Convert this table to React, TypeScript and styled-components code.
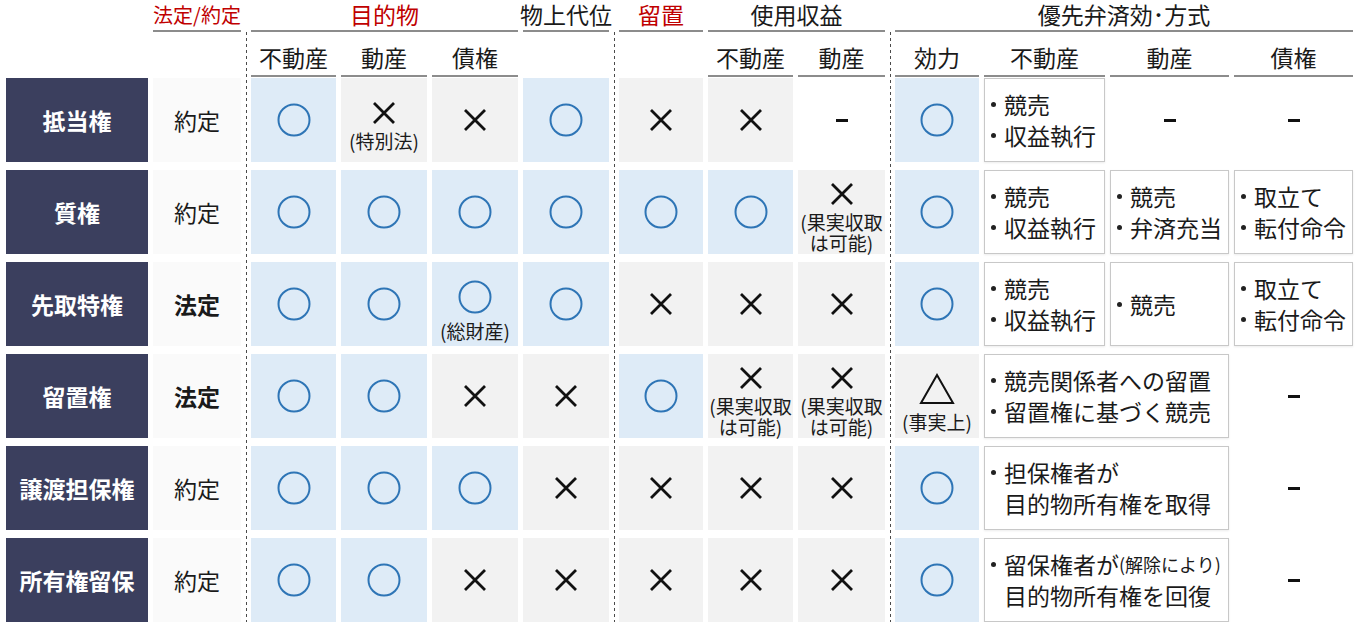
import React from 'react'
import styled, { createGlobalStyle } from 'styled-components'

const GlobalStyle = createGlobalStyle`
  html, body {
    margin: 0;
    padding: 0;
    background: #ffffff;
  }
  body {
    font-family: "Noto Sans CJK JP", "Noto Sans", sans-serif;
    color: #1a1a1a;
  }
`

// label | kind | div | 目的物 x3 | 物上代位 | div | 留置 | 使用収益 x2 | div | 効力 | 方式 x3
const COLS = '142px 88px 0 85px 86px 86px 86px 0 84px 85px 87px 0 84px 121px 119px 119px'

const Table = styled.div`
  display: grid;
  grid-template-columns: ${COLS};
  grid-template-rows: 32px 46px;
  grid-auto-rows: 92px;
  column-gap: 5px;
  padding-left: 6px;
`

const GroupHead = styled.div<{ $col: string; $red?: boolean; $small?: boolean }>`
  grid-row: 1;
  grid-column: ${p => p.$col};
  height: 32px;
  box-sizing: border-box;
  border-bottom: 2px solid #8c8c8c;
  display: flex;
  align-items: center;
  justify-content: center;
  font-size: ${p => (p.$small ? 20 : 23)}px;
  line-height: 1.3;
  white-space: nowrap;
  color: ${p => (p.$red ? '#c00000' : '#1a1a1a')};
`

const SubHead = styled.div<{ $col: number }>`
  grid-row: 2;
  grid-column: ${p => p.$col};
  height: 45px;
  box-sizing: border-box;
  border-bottom: 2px solid #8c8c8c;
  display: flex;
  align-items: flex-end;
  justify-content: center;
  padding-bottom: 3px;
  font-size: 23px;
  line-height: 1.2;
`

const Divider = styled.div<{ $col: number }>`
  grid-row: 2 / span 7;
  grid-column: ${p => p.$col};
  width: 1px;
  background: repeating-linear-gradient(to bottom, #4a4a4a 0 3px, transparent 3px 6px);
`

const Label = styled.div<{ $row: number }>`
  grid-row: ${p => p.$row};
  grid-column: 1;
  height: 84px;
  background: #3b3f5e;
  color: #ffffff;
  font-weight: 700;
  font-size: 23px;
  display: flex;
  align-items: center;
  justify-content: center;
`

const Kind = styled.div<{ $row: number; $bold?: boolean }>`
  grid-row: ${p => p.$row};
  grid-column: 2;
  height: 84px;
  background: #fafafa;
  font-size: 23px;
  font-weight: ${p => (p.$bold ? 700 : 400)};
  display: flex;
  align-items: center;
  justify-content: center;
`

const TONES = { blue: '#deebf7', gray: '#f2f2f2', white: '#ffffff' }
type Tone = keyof typeof TONES

const MarkCell = styled.div<{ $row: number; $col: number; $tone: Tone; $noted?: boolean }>`
  grid-row: ${p => p.$row};
  grid-column: ${p => p.$col};
  height: 84px;
  box-sizing: border-box;
  background: ${p => TONES[p.$tone]};
  display: flex;
  flex-direction: column;
  align-items: center;
  justify-content: center;
  gap: 6px;
  padding-top: ${p => (p.$noted ? 12 : 0)}px;
`

const Note = styled.div`
  font-size: 19px;
  line-height: 21px;
  text-align: center;
  white-space: nowrap;
`

const Dash = styled.span`
  display: block;
  width: 12px;
  height: 3px;
  background: #111;
`

const MethodBox = styled.div<{ $row: number; $col: string }>`
  grid-row: ${p => p.$row};
  grid-column: ${p => p.$col};
  height: 84px;
  box-sizing: border-box;
  background: #ffffff;
  border: 1px solid #c8c8c8;
  box-shadow: 0 1px 2px rgba(0, 0, 0, 0.08);
  padding: 0 4px;
  display: flex;
  flex-direction: column;
  justify-content: center;
  font-size: 23px;
  line-height: 31px;
  white-space: nowrap;
`

const Line = styled.div`
  display: flex;
  align-items: center;
`

const Bullet = styled.span<{ $hidden?: boolean }>`
  flex: none;
  width: 15px;
  display: flex;
  align-items: center;
  &::before {
    content: '';
    width: 5px;
    height: 5px;
    border-radius: 50%;
    margin-left: 2px;
    background: ${p => (p.$hidden ? 'transparent' : '#222')};
  }
`

const Small = styled.span`
  font-size: 18px;
`

const Circle = () => (
  <svg width="34" height="34" viewBox="0 0 34 34">
    <circle cx="17" cy="17" r="15.5" fill="none" stroke="#2e75b6" strokeWidth="2" />
  </svg>
)

const Cross = () => (
  <svg width="24" height="22" viewBox="0 0 24 22">
    <path d="M2 1 L22 21 M22 1 L2 21" stroke="#111" strokeWidth="2.8" fill="none" />
  </svg>
)

const Triangle = () => (
  <svg width="36" height="32" viewBox="0 0 36 32">
    <polygon points="18,2 34,30 2,30" fill="none" stroke="#111" strokeWidth="2" strokeLinejoin="miter" />
  </svg>
)

type Kindname = 'o' | 'x' | 'tri' | 'dash'
type Mark = { k: Kindname; tone: Tone; note?: string[] }
type MethodLine = { text: string; small?: string; noBullet?: boolean }
type Method = { col: string; lines?: MethodLine[] }

const o: Mark = { k: 'o', tone: 'blue' }
const x: Mark = { k: 'x', tone: 'gray' }
const fruit = ['(果実収取', 'は可能)']

const MARK_COLS = [4, 5, 6, 7, 9, 10, 11, 13]

const rows: { name: string; kind: string; legal?: boolean; marks: Mark[]; methods: Method[] }[] = [
  {
    name: '抵当権',
    kind: '約定',
    marks: [o, { ...x, note: ['(特別法)'] }, x, o, x, x, { k: 'dash', tone: 'white' }, o],
    methods: [
      { col: '14', lines: [{ text: '競売' }, { text: '収益執行' }] },
      { col: '15' },
      { col: '16' },
    ],
  },
  {
    name: '質権',
    kind: '約定',
    marks: [o, o, o, o, o, o, { ...x, note: fruit }, o],
    methods: [
      { col: '14', lines: [{ text: '競売' }, { text: '収益執行' }] },
      { col: '15', lines: [{ text: '競売' }, { text: '弁済充当' }] },
      { col: '16', lines: [{ text: '取立て' }, { text: '転付命令' }] },
    ],
  },
  {
    name: '先取特権',
    kind: '法定',
    legal: true,
    marks: [o, o, { ...o, note: ['(総財産)'] }, o, x, x, x, o],
    methods: [
      { col: '14', lines: [{ text: '競売' }, { text: '収益執行' }] },
      { col: '15', lines: [{ text: '競売' }] },
      { col: '16', lines: [{ text: '取立て' }, { text: '転付命令' }] },
    ],
  },
  {
    name: '留置権',
    kind: '法定',
    legal: true,
    marks: [o, o, x, x, o, { ...x, note: fruit }, { ...x, note: fruit }, { k: 'tri', tone: 'gray', note: ['(事実上)'] }],
    methods: [
      { col: '14 / span 2', lines: [{ text: '競売関係者への留置' }, { text: '留置権に基づく競売' }] },
      { col: '16' },
    ],
  },
  {
    name: '譲渡担保権',
    kind: '約定',
    marks: [o, o, o, x, x, x, x, o],
    methods: [
      { col: '14 / span 2', lines: [{ text: '担保権者が' }, { text: '目的物所有権を取得', noBullet: true }] },
      { col: '16' },
    ],
  },
  {
    name: '所有権留保',
    kind: '約定',
    marks: [o, o, x, x, x, x, x, o],
    methods: [
      {
        col: '14 / span 2',
        lines: [{ text: '留保権者が', small: '(解除により)' }, { text: '目的物所有権を回復', noBullet: true }],
      },
      { col: '16' },
    ],
  },
]

function Glyph({ k }: { k: Kindname }) {
  if (k === 'o') return <Circle />
  if (k === 'x') return <Cross />
  if (k === 'tri') return <Triangle />
  return <Dash />
}

export default function App() {
  return (
    <>
      <GlobalStyle />
      <Table>
        <GroupHead $col="2" $red $small>法定/約定</GroupHead>
        <GroupHead $col="4 / 7" $red>目的物</GroupHead>
        <GroupHead $col="7">物上代位</GroupHead>
        <GroupHead $col="9" $red>留置</GroupHead>
        <GroupHead $col="10 / 12">使用収益</GroupHead>
        <GroupHead $col="13 / 17">優先弁済効･方式</GroupHead>

        <SubHead $col={4}>不動産</SubHead>
        <SubHead $col={5}>動産</SubHead>
        <SubHead $col={6}>債権</SubHead>
        <SubHead $col={10}>不動産</SubHead>
        <SubHead $col={11}>動産</SubHead>
        <SubHead $col={13}>効力</SubHead>
        <SubHead $col={14}>不動産</SubHead>
        <SubHead $col={15}>動産</SubHead>
        <SubHead $col={16}>債権</SubHead>

        <Divider $col={3} />
        <Divider $col={8} />
        <Divider $col={12} />

        {rows.map((r, i) => {
          const row = i + 3
          return (
            <React.Fragment key={r.name}>
              <Label $row={row}>{r.name}</Label>
              <Kind $row={row} $bold={r.legal}>{r.kind}</Kind>
              {r.marks.map((m, j) => (
                <MarkCell key={j} $row={row} $col={MARK_COLS[j]} $tone={m.tone} $noted={!!m.note}>
                  <Glyph k={m.k} />
                  {m.note && (
                    <Note>
                      {m.note.map(n => (
                        <div key={n}>{n}</div>
                      ))}
                    </Note>
                  )}
                </MarkCell>
              ))}
              {r.methods.map(m =>
                m.lines ? (
                  <MethodBox key={m.col} $row={row} $col={m.col}>
                    {m.lines.map(l => (
                      <Line key={l.text}>
                        <Bullet $hidden={l.noBullet} />
                        {l.text}
                        {l.small && <Small>{l.small}</Small>}
                      </Line>
                    ))}
                  </MethodBox>
                ) : (
                  <MarkCell key={m.col} $row={row} $col={Number(m.col)} $tone="white">
                    <Dash />
                  </MarkCell>
                )
              )}
            </React.Fragment>
          )
        })}
      </Table>
    </>
  )
}
